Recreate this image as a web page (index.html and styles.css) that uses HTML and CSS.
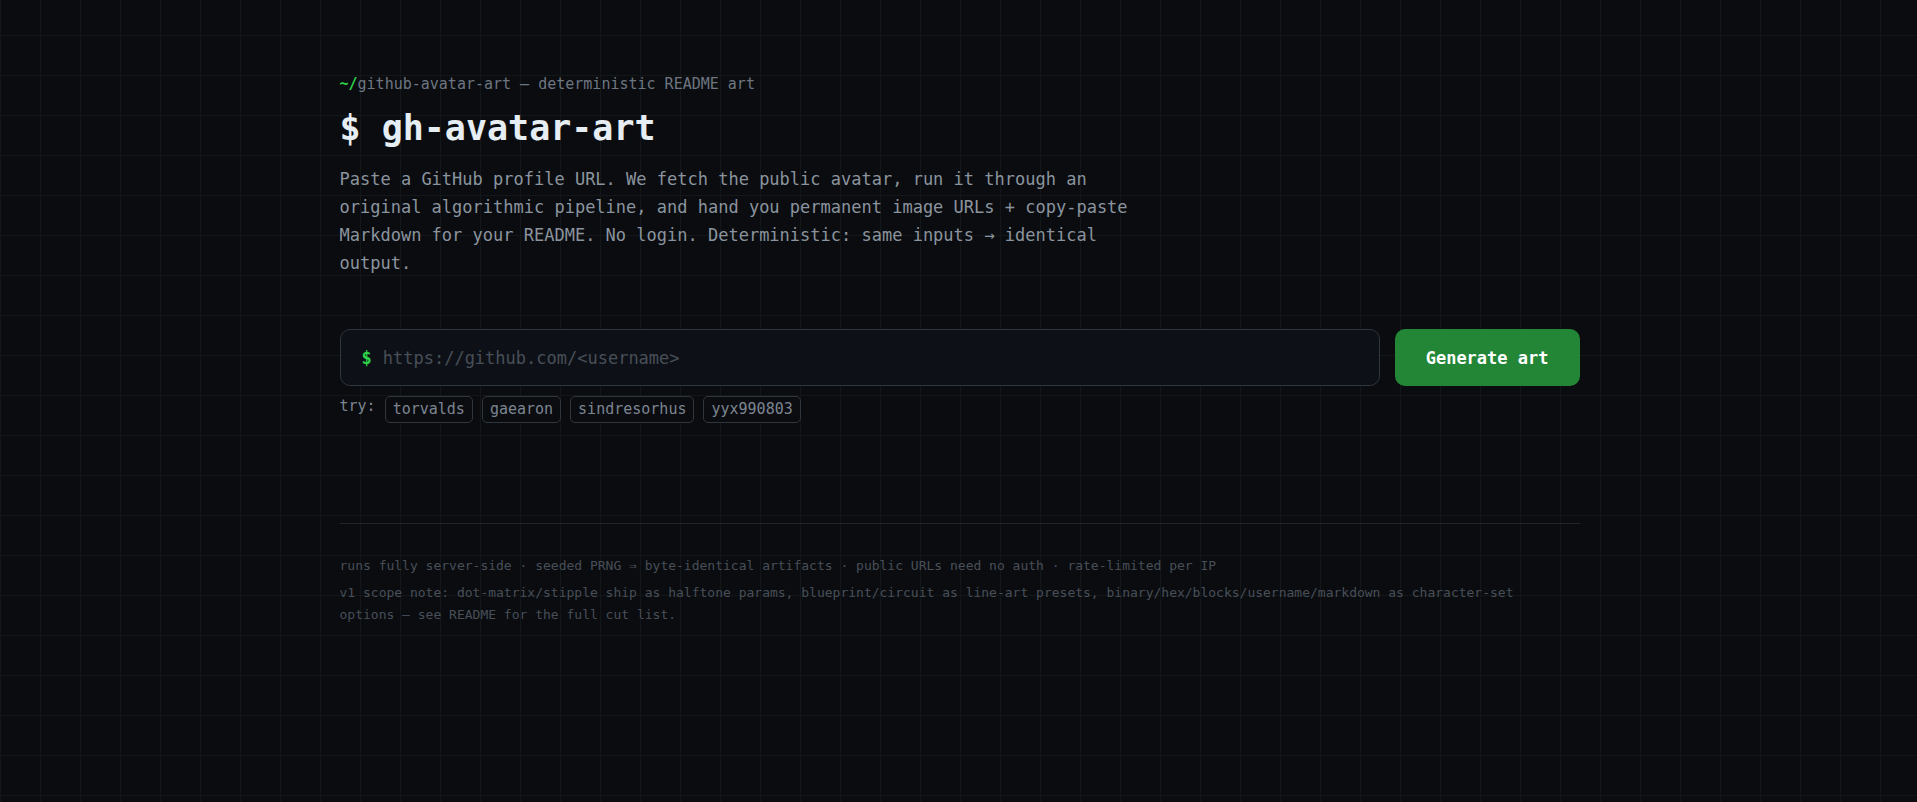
FILE: index.html
```html
<!DOCTYPE html>
<html lang="en">

<head>
  <meta charset="UTF-8" />
  <title>gh-avatar-art</title>
  <meta name="viewport" content="width=device-width, initial-scale=1.0" />
  <link rel="stylesheet" href="styles.css">
</head>

<body>
  <div class="page">
    <header class="intro">
      <p class="eyebrow"><span class="prompt">~/</span>github-avatar-art — deterministic README art</p>
      <h1>$ gh-avatar-art</h1>
      <p class="lead">Paste a GitHub profile URL. We fetch the public avatar, run it through an original algorithmic pipeline, and hand you permanent image URLs + copy-paste Markdown for your README. No login. Deterministic: same inputs → identical output.</p>
    </header>

    <main>
      <form class="search">
        <div class="field">
          <label class="prompt" for="profile">$</label>
          <input type="text" id="profile" placeholder="https://github.com/&lt;username&gt;" autocomplete="off" spellcheck="false">
        </div>
        <button type="submit" class="generate">Generate art</button>
      </form>

      <div class="examples">
        <span class="try">try:</span>
        <button type="button" class="chip">torvalds</button>
        <button type="button" class="chip">gaearon</button>
        <button type="button" class="chip">sindresorhus</button>
        <button type="button" class="chip">yyx990803</button>
      </div>
    </main>

    <footer>
      <p>runs fully server-side · seeded PRNG ⇒ byte-identical artifacts · public URLs need no auth · rate-limited per IP</p>
      <p>v1 scope note: dot-matrix/stipple ship as halftone params, blueprint/circuit as line-art presets, binary/hex/blocks/username/markdown as character-set options — see README for the full cut list.</p>
    </footer>
  </div>

  <script>
    const profile = document.getElementById("profile");

    document.querySelector(".search").addEventListener("submit", e => e.preventDefault());

    document.querySelectorAll(".chip").forEach(chip => {
      chip.addEventListener("click", () => {
        profile.value = "https://github.com/" + chip.textContent;
        profile.focus();
      });
    });
  </script>
</body>

</html>
```

FILE: styles.css
```css
* {
  box-sizing: border-box;
  margin: 0;
  padding: 0;
}

/* Faint 40px grid behind everything */
body {
  min-height: 100vh;
  background-color: #0a0c10;
  background-image:
    linear-gradient(to right, #14171a 1px, transparent 1px),
    linear-gradient(to bottom, #14171a 1px, transparent 1px);
  background-size: 40px 40px;
  background-position: 0 35px;
  color: #8b949e;
  font-family: "DejaVu Sans Mono", "Liberation Mono", monospace;
  font-size: 15px;
  line-height: 20px;
}

input, button {
  font-family: inherit;
}

.page {
  max-width: 1280px;
  margin: 0 auto;
  padding: 74px 19px 40px 21px;
}

.prompt {
  color: #2fd14a;
}

/* Intro */
.eyebrow {
  color: #6e7681;
}

.eyebrow .prompt {
  font-weight: 700;
}

h1 {
  margin: 12px 0 15px;
  color: #e6edf3;
  font-size: 35px;
  font-weight: 700;
  line-height: 44px;
}

.lead {
  max-width: 820px;
  font-size: 17px;
  line-height: 28px;
}

/* Search */
.search {
  display: flex;
  gap: 15px;
  margin-top: 52px;
}

.field {
  flex: 1;
  display: flex;
  align-items: center;
  gap: 11px;
  height: 57px;
  padding: 0 21px;
  background-color: #0d1117;
  border: 1px solid #30363d;
  border-radius: 10px;
}

.field .prompt {
  font-size: 17px;
  font-weight: 700;
}

.field input {
  flex: 1;
  min-width: 0;
  background: none;
  border: none;
  outline: none;
  color: #e6edf3;
  font-size: 17px;
}

.field input::placeholder {
  color: #484f58;
}

.field:focus-within {
  border-color: #238636;
}

.generate {
  padding: 0 31px;
  background-color: #238636;
  border: none;
  border-radius: 10px;
  color: #fff;
  font-size: 17px;
  font-weight: 700;
  cursor: pointer;
}

/* Example users */
.examples {
  display: flex;
  flex-wrap: wrap;
  gap: 9px;
  margin-top: 10px;
}

.try {
  color: #7d8590;
}

.chip {
  height: 27px;
  padding: 0 7px 2px;
  background-color: #0a0c10;
  border: 1px solid #30363d;
  border-radius: 5px;
  color: #7d8590;
  font-size: 15px;
  line-height: 20px;
  cursor: pointer;
}

.chip:hover {
  border-color: #238636;
}

/* Footer */
footer {
  margin-top: 100px;
  padding-top: 31px;
  border-top: 1px solid #21262d;
  color: #484f58;
  font-size: 13px;
  line-height: 22px;
}

footer p {
  max-width: 1220px;
}

footer p + p {
  margin-top: 5px;
}

@media (max-width: 768px) {
  .search {
    flex-direction: column;
  }

  .generate {
    height: 57px;
  }
}
```
